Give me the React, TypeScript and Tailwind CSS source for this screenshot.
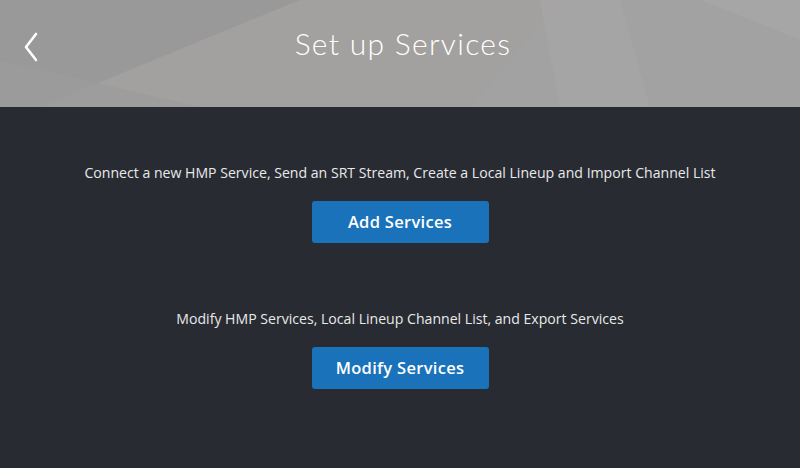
import React from "react";

const Header: React.FC = () => (
  <div className="relative h-[107px] overflow-hidden bg-[#9e9d9d]">
    <svg className="absolute inset-0" width="800" height="107" viewBox="0 0 800 107" preserveAspectRatio="none">
      <polygon points="0,0 300,0 40,107 0,107" fill="#9a9999" />
      <polygon points="300,0 560,0 470,107 40,107" fill="#a2a1a0" />
      <polygon points="560,0 800,0 800,107 470,107" fill="#a3a2a2" />
      <polygon points="540,0 620,0 650,107 560,107" fill="#a8a7a7" opacity="0.6" />
      <polygon points="700,0 800,0 800,40" fill="#a9a8a8" opacity="0.6" />
      <polygon points="0,60 200,107 0,107" fill="#9c9b9b" opacity="0.7" />
    </svg>
    <button className="absolute left-[20px] top-[28px] p-1">
      <svg width="14" height="30" viewBox="0 0 14 30" fill="none" stroke="white" strokeWidth="2.6" strokeLinecap="round" strokeLinejoin="round">
        <path d="M12 2 L2 15 L12 28" />
      </svg>
    </button>
    <h1 className="relative pl-[6px] pt-[21px] text-center font-['Lato',sans-serif] text-[30px] font-light tracking-[1.3px] text-white">
      Set up Services
    </h1>
  </div>
);

const Section: React.FC<{ text: string; label: string }> = ({ text, label }) => (
  <div className="flex flex-col items-center">
    <p className="font-['Open_Sans',sans-serif] text-[14.1px] text-[#e8e9ea]">{text}</p>
    <button className="mt-[18px] h-[42px] w-[177px] rounded-[3px] bg-[#1a72bb] font-['Open_Sans',sans-serif] text-[16.5px] font-semibold tracking-[0.3px] text-white hover:bg-[#1b7fd0]">
      {label}
    </button>
  </div>
);

const App: React.FC = () => {
  return (
    <div className="h-[468px] w-[800px] bg-[#282b31]">
      <Header />
      <div className="flex flex-col gap-[65px] pt-[55px]">
        <Section
          text="Connect a new HMP Service, Send an SRT Stream, Create a Local Lineup and Import Channel List"
          label="Add Services"
        />
        <Section text="Modify HMP Services, Local Lineup Channel List, and Export Services" label="Modify Services" />
      </div>
    </div>
  );
};

export default App;
